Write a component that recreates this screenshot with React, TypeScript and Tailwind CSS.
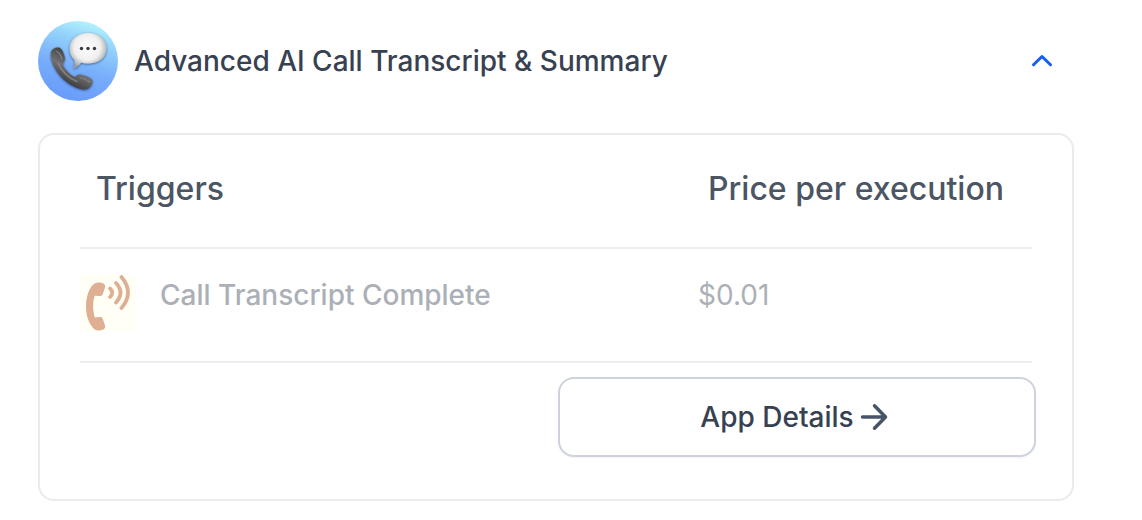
import { useState } from "react";

function AppLogo() {
  return (
    <svg className="size-20 shrink-0" viewBox="0 0 80 80" aria-hidden="true">
      <defs>
        <linearGradient id="sky" x1="0.7" y1="0" x2="0.4" y2="1">
          <stop offset="0" stopColor="#b8f6fd" />
          <stop offset="0.25" stopColor="#94d3fc" />
          <stop offset="0.6" stopColor="#78aefa" />
          <stop offset="1" stopColor="#689bfb" />
        </linearGradient>
        <radialGradient id="bubble" cx="0.48" cy="0.4" r="0.6">
          <stop offset="0" stopColor="#ffffff" />
          <stop offset="0.6" stopColor="#efefef" />
          <stop offset="1" stopColor="#9a9d9f" />
        </radialGradient>
        <linearGradient id="handset" x1="0.6" y1="0.2" x2="0.3" y2="0.8">
          <stop offset="0" stopColor="#454547" />
          <stop offset="0.5" stopColor="#717173" />
          <stop offset="1" stopColor="#3f3f42" />
        </linearGradient>
        <filter id="soft" x="-20%" y="-20%" width="140%" height="140%">
          <feDropShadow dx="0" dy="0.8" stdDeviation="1" floodColor="#1d3557" floodOpacity="0.7" />
        </filter>
      </defs>
      <circle cx="40" cy="40" r="40" fill="url(#sky)" />
      <g filter="url(#soft)">
        <path
          d="M50 12C60 11.600 68.500 18 68.500 27.500C68.500 37 60.500 42.500 50 42.500C47.500 42.500 45 42.300 43 41.500C41 44.500 38.500 47 35.500 48C36.500 45 37 42 36.500 39C33 36 31.500 32 31.500 27.500C31.500 18 40 12.300 50 12Z"
          fill="url(#bubble)"
        />
      </g>
      <g fill="#3b3b3d">
        <circle cx="43.500" cy="27.500" r="1.700" />
        <circle cx="50" cy="27.500" r="1.700" />
        <circle cx="56.500" cy="27.500" r="1.700" />
      </g>
      <g filter="url(#soft)">
        <path
          d="M13 31C14 27.500 19 25.500 22 27C24.500 28.500 26.500 34 27 37.500C27.200 40 24.500 41.500 25 43.500C26 47.500 31.500 53 36 55.500C38 56.500 38.500 53.500 41 53.500C45 53.500 52 56 54 58.500C55.800 61 53 66.500 49.500 68C43 70.500 31 64 24.500 57.500C18 51 11 39 13 31Z"
          fill="url(#handset)"
        />
      </g>
      <path d="M20 42C23 50 31 57.500 39 60.500" fill="none" stroke="#9a9a9c" strokeWidth="1.500" opacity="0.6" strokeLinecap="round" />
      <path d="M18.500 30.500C20.500 31 23 34.500 24 38" fill="none" stroke="#a0a0a2" strokeWidth="1.200" opacity="0.6" strokeLinecap="round" />
      <path d="M42 57C46 57.500 50 59.500 51.500 61" fill="none" stroke="#a0a0a2" strokeWidth="1.200" opacity="0.5" strokeLinecap="round" />
    </svg>
  );
}

function RingingPhone() {
  return (
    <svg className="size-14 shrink-0 bg-[#fffff6]" viewBox="0 0 56 56" aria-hidden="true">
      <path
        d="M15 8.200C18 7 22 7.400 24 9C25.500 10.200 25.400 12 24.500 14L22.800 19C22.200 20.800 21 21.200 19 21L14.500 20.800C12.600 28 12.600 35 14.800 42.500L19.500 42C21.300 41.800 22.200 42.400 22.800 44L25 50.500C25.600 52.300 25 53.500 23.200 54.500C20 56.200 16 56 13.500 53.500C8.500 48 6 40.500 6 31.500C6 21.500 9.500 11 15 8.200Z"
        fill="#dfaf94"
      />
      <g fill="none" stroke="#dfaf94" strokeWidth="3.800" strokeLinecap="round">
        <path d="M30 13.500Q34.500 17.500 30 22" />
        <path d="M36 8Q45 17.500 36 27.500" />
        <path d="M41.500 2Q54.500 17.500 41.500 33" />
      </g>
    </svg>
  );
}

const triggers = [{ name: "Call Transcript Complete", price: "$0.01" }];

export default function App() {
  const [open, setOpen] = useState(true);

  return (
    <main className="bg-white pt-[21px] pr-[68px] pb-5 pl-[38px] font-['Inter',sans-serif] font-medium">
      <h2>
        <button
          type="button"
          aria-expanded={open}
          aria-controls="app-panel"
          onClick={() => setOpen(!open)}
          className="flex w-full items-center gap-4 pr-5 text-left text-[28px] leading-10 text-[#374151]"
        >
          <AppLogo />
          <span className="grow">Advanced AI Call Transcript &amp; Summary</span>
          <svg className="h-6 w-6 shrink-0" viewBox="0 0 24 24" fill="none" stroke="#155eef" strokeWidth="3" strokeLinecap="round" strokeLinejoin="round" aria-hidden="true">
            <path d="M3.500 15.800L12 7.500L20.500 15.800" />
          </svg>
        </button>
      </h2>

      {open && (
        <section id="app-panel" className="mt-8 rounded-2xl border-2 border-[#eaeaef] pr-9 pb-[42px] pl-10">
          <div className="pr-1">
            <table className="w-full border-collapse text-left">
              <thead>
                <tr className="border-b-2 border-[#ededf3] text-[32px] leading-10 text-[#4b5563]">
                  <th scope="col" className="pt-[34px] pb-[38px] pl-4 font-medium">Triggers</th>
                  <th scope="col" className="w-[340px] pt-[34px] pb-[38px] pl-4 font-medium">Price per execution</th>
                </tr>
              </thead>
              <tbody>
                {triggers.map((trigger) => (
                  <tr key={trigger.name} className="border-b-2 border-[#ededf3] align-top text-[28px] leading-10 text-[#abb0b7]">
                    <td className="pt-[26px] pb-[30px]">
                      <div className="flex items-start gap-6">
                        <RingingPhone />
                        <span>{trigger.name}</span>
                      </div>
                    </td>
                    <td className="pt-[26px] pb-[30px] pl-1.5 font-normal">{trigger.price}</td>
                  </tr>
                ))}
              </tbody>
            </table>
          </div>
          <div className="mt-3.5 flex justify-end">
            <button
              type="button"
              className="flex h-20 w-1/2 items-center justify-center gap-1.5 rounded-2xl border-2 border-[#cdd2de] pr-1.5 text-[28px] leading-10 text-[#374151] shadow-xs"
            >
              App Details
              <svg className="h-7 w-7" viewBox="0 0 28 28" fill="none" stroke="#475467" strokeWidth="3.500" strokeLinecap="round" strokeLinejoin="round" aria-hidden="true">
                <path d="M2.500 14H25.500M14.500 2.800L25.500 14L14.500 25.200" />
              </svg>
            </button>
          </div>
        </section>
      )}
    </main>
  );
}
